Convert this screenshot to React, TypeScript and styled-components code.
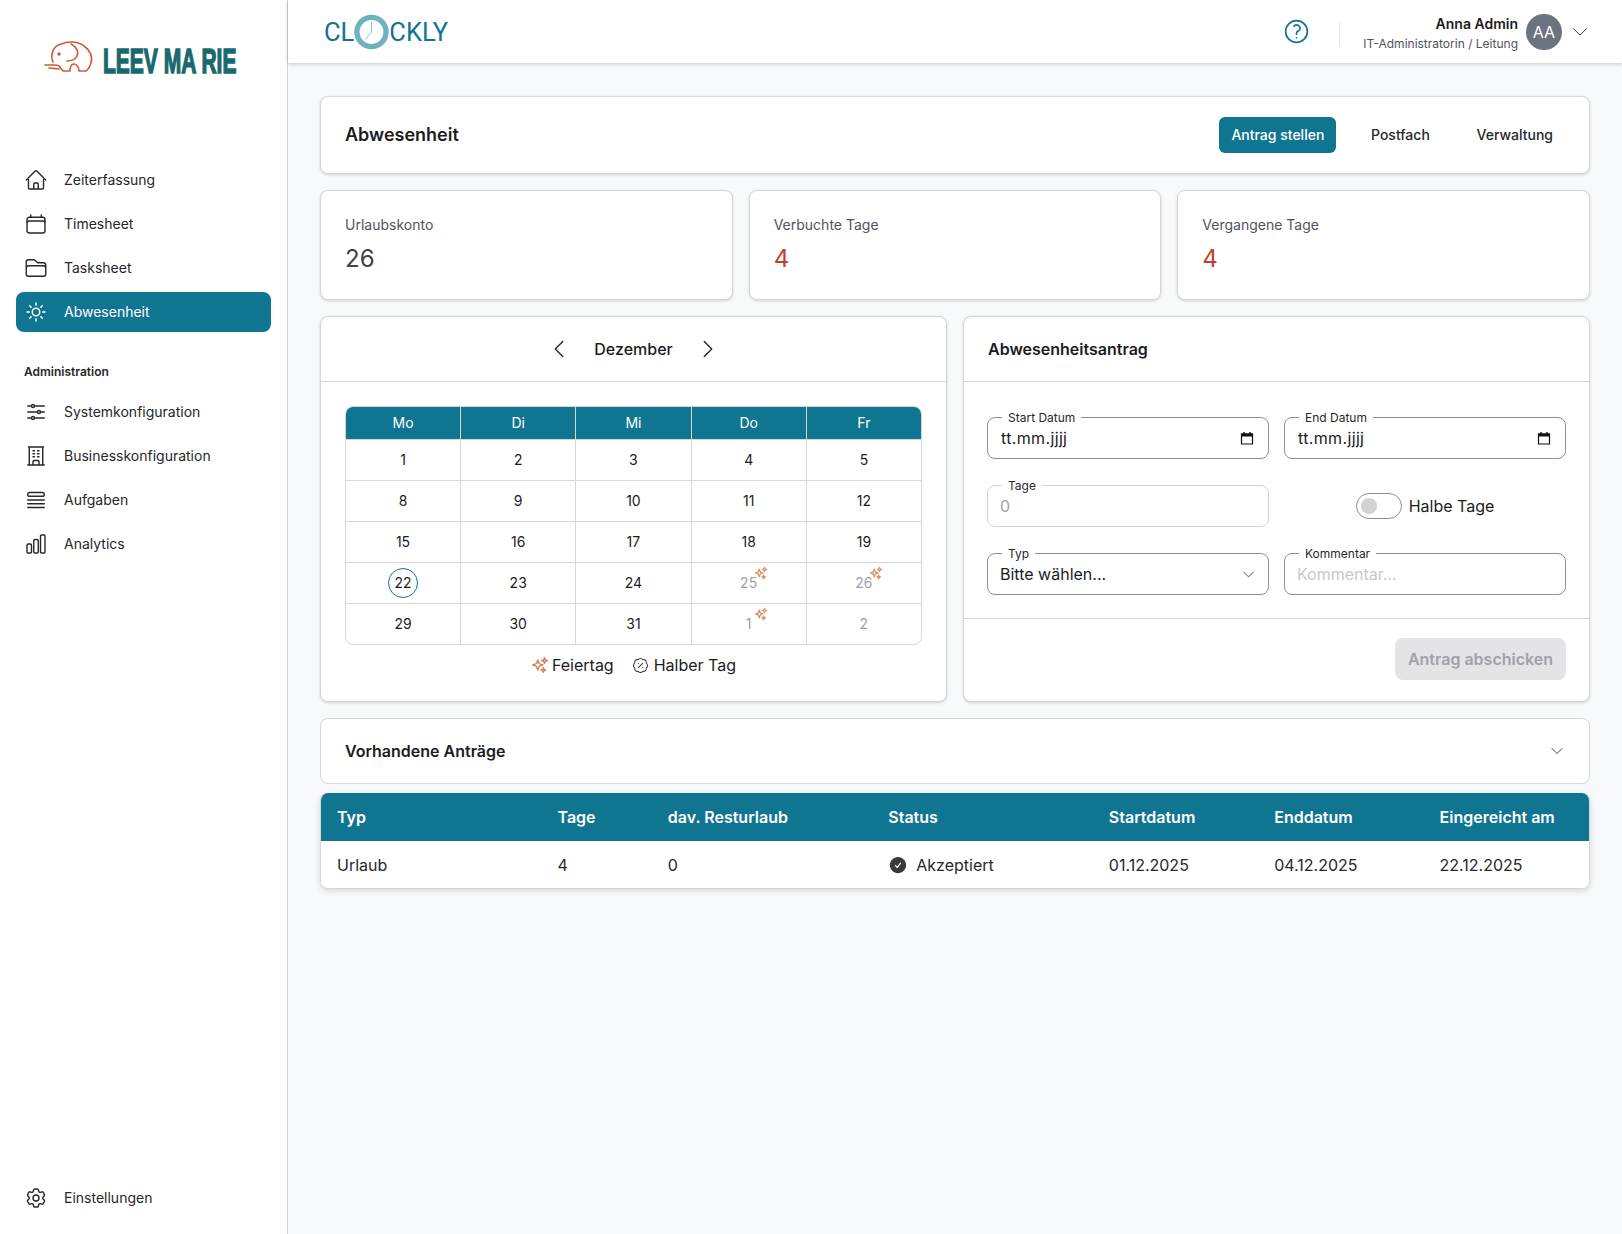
import React from "react";
import styled, { createGlobalStyle } from "styled-components";
import {
  HiOutlineHome,
  HiOutlineCalendar,
  HiOutlineFolder,
  HiOutlineSun,
  HiOutlineAdjustmentsHorizontal,
  HiOutlineBuildingOffice,
  HiOutlineQueueList,
  HiOutlineChartBar,
  HiOutlineCog6Tooth,
  HiOutlineQuestionMarkCircle,
  HiOutlineChevronDown,
  HiOutlineChevronLeft,
  HiOutlineChevronRight,
  HiOutlineSparkles,
  HiCheckCircle,
} from "react-icons/hi2";
import { BadgePercent } from "lucide-react";

const TEAL = "#107591";
const BORDER = "#d6d6da";

const GlobalStyle = createGlobalStyle`
  html, body { margin: 0; padding: 0; }
  body {
    font-family: Inter, "Liberation Sans", sans-serif;
    color: #1c1c1e;
    background: #f8f9fb;
  }
  * { box-sizing: border-box; }
`;

const Shell = styled.div`
  display: flex;
  min-height: 100vh;
`;

const Sidebar = styled.aside`
  width: 288px;
  flex: none;
  display: flex;
  flex-direction: column;
  background: #fff;
  border-right: 1px solid #d4d4d8;
  padding: 0 16px 16px;
`;

const LogoBlock = styled.div`
  height: 160px;
  display: flex;
  align-items: flex-start;
  padding: 40px 0 0 28px;
`;

const ElephantSvg = styled.svg`
  width: 60px;
  height: 45px;
  flex: none;
`;

const Wordmark = styled.span`
  flex: none;
  margin: 1px 0 0 -1px;
  font-family: "Liberation Sans", sans-serif;
  font-size: 35px;
  line-height: 40px;
  font-weight: 700;
  white-space: nowrap;
  color: #17696e;
  -webkit-text-stroke: 1.5px #17696e;
  transform: scaleX(0.6);
  transform-origin: left center;
`;

const NavList = styled.nav`
  display: flex;
  flex-direction: column;
  gap: 4px;
`;

const NavItem = styled.a<{ $active?: boolean }>`
  height: 40px;
  display: flex;
  align-items: center;
  gap: 16px;
  padding-left: 8px;
  border-radius: 8px;
  font-size: 14px;
  color: ${(p) => (p.$active ? "#fff" : "#27272a")};
  background: ${(p) => (p.$active ? TEAL : "transparent")};
  svg { width: 24px; height: 24px; flex: none; stroke-width: 1.4; }
`;

const NavLabel = styled.span`
  margin-bottom: 2px;
`;

const SectionLabel = styled.div`
  margin: 32px 0 12px 8px;
  font-size: 12px;
  line-height: 16px;
  font-weight: 600;
  color: #27272a;
`;

const SidebarFoot = styled.div`
  margin-top: auto;
`;

const Main = styled.div`
  flex: 1;
  min-width: 0;
  display: flex;
  flex-direction: column;
`;

const TopBar = styled.header`
  height: 63px;
  display: flex;
  align-items: center;
  justify-content: space-between;
  padding: 0 32px 0 36px;
  background: #fff;
  box-shadow: 0 1px 4px rgba(0, 0, 0, 0.22);
`;

const BrandText = styled.div`
  display: flex;
  align-items: center;
  font-family: Roboto, sans-serif;
  font-size: 25.5px;
  color: ${TEAL};
`;

const TopRight = styled.div`
  display: flex;
  align-items: center;
`;

const HelpIcon = styled(HiOutlineQuestionMarkCircle)`
  width: 29px;
  height: 29px;
  color: ${TEAL};
  stroke-width: 1.4;
`;

const VDivider = styled.div`
  width: 1px;
  height: 24px;
  margin: 4px 23px 0 28px;
  background: #e4e4e7;
`;

const UserText = styled.div`
  display: flex;
  flex-direction: column;
  align-items: flex-end;
  margin-right: 8px;
  padding-top: 4px;
`;

const UserName = styled.div`
  font-size: 14px;
  line-height: 20px;
  font-weight: 600;
  color: #1c1c1e;
`;

const UserRole = styled.div`
  font-size: 12px;
  line-height: 20px;
  color: #52525b;
`;

const Avatar = styled.div`
  width: 36px;
  height: 36px;
  border-radius: 50%;
  background: #6b7280;
  color: #fff;
  font-size: 16px;
  display: flex;
  align-items: center;
  justify-content: center;
  margin-right: 8px;
`;

const UserChevron = styled(HiOutlineChevronDown)`
  width: 20px;
  height: 20px;
  color: #3f3f46;
  stroke-width: 1.2;
`;

const Content = styled.main`
  padding: 33px 32px 32px;
  display: flex;
  flex-direction: column;
  gap: 16px;
`;

const Card = styled.section`
  background: #fff;
  border: 1px solid ${BORDER};
  border-radius: 8px;
  box-shadow: 0 1px 3px rgba(0, 0, 0, 0.16);
`;

const PageCard = styled(Card)`
  height: 78px;
  display: flex;
  align-items: center;
  justify-content: space-between;
  padding: 0 24px;
`;

const PageTitle = styled.h1`
  margin: 0 0 2px;
  font-size: 18px;
  font-weight: 600;
`;

const Tabs = styled.div`
  display: flex;
  gap: 22.7px;
`;

const Tab = styled.button<{ $active?: boolean }>`
  height: 36px;
  padding: 0 12px 2px;
  border: none;
  border-radius: 6px;
  font-family: inherit;
  font-size: 14px;
  font-weight: 500;
  background: ${(p) => (p.$active ? TEAL : "transparent")};
  color: ${(p) => (p.$active ? "#fff" : "#27272a")};
`;

const StatRow = styled.div`
  display: grid;
  grid-template-columns: repeat(3, minmax(0, 1fr));
  gap: 16px;
`;

const StatCard = styled(Card)`
  height: 110px;
  padding: 24px;
`;

const StatLabel = styled.div`
  font-size: 14px;
  line-height: 20px;
  color: #52525b;
`;

const StatValue = styled.div<{ $red?: boolean }>`
  margin-top: 8px;
  font-size: 24px;
  line-height: 32px;
  color: ${(p) => (p.$red ? "#c2402a" : "#3f3f46")};
`;

const TwoCols = styled.div`
  display: grid;
  grid-template-columns: repeat(2, minmax(0, 1fr));
  gap: 16px;
`;

const PanelCard = styled(Card)`
  height: 386px;
  display: flex;
  flex-direction: column;
`;

const PanelHead = styled.div<{ $center?: boolean }>`
  height: 65px;
  flex: none;
  display: flex;
  align-items: center;
  justify-content: ${(p) => (p.$center ? "center" : "flex-start")};
  gap: 23px;
  padding: 0 24px;
  border-bottom: 1px solid ${BORDER};
`;

const PanelTitle = styled.h2`
  margin: 0;
  font-size: 16px;
  font-weight: 600;
`;

const MonthName = styled.div`
  font-size: 16px;
  font-weight: 500;
`;

const MonthArrow = styled.span`
  display: flex;
  color: #27272a;
  svg { width: 24px; height: 24px; stroke-width: 1.4; }
`;

const CalBody = styled.div`
  padding: 24px 24px 0;
`;

const CalGrid = styled.div`
  display: grid;
  grid-template-columns: minmax(0, 0.99fr) repeat(4, minmax(0, 1fr));
  border: 1px solid ${BORDER};
  border-radius: 8px;
  overflow: hidden;
`;

const CalHead = styled.div`
  height: 32px;
  display: flex;
  align-items: center;
  justify-content: center;
  padding-bottom: 2px;
  background: ${TEAL};
  color: #fff;
  font-size: 14px;
  border-left: 1px solid ${BORDER};
  &:first-child { border-left: none; }
`;

const CalCell = styled.div<{ $first?: boolean }>`
  position: relative;
  height: 41px;
  display: flex;
  align-items: center;
  justify-content: center;
  padding-bottom: 1px;
  font-size: 14px;
  border-top: 1px solid ${BORDER};
  border-left: ${(p) => (p.$first ? "none" : `1px solid ${BORDER}`)};
`;

const DayNumber = styled.span<{ $muted?: boolean; $today?: boolean }>`
  display: flex;
  align-items: center;
  justify-content: center;
  width: ${(p) => (p.$today ? "30px" : "auto")};
  height: ${(p) => (p.$today ? "30px" : "auto")};
  border-radius: 50%;
  border: ${(p) => (p.$today ? `1px solid ${TEAL}` : "none")};
  color: ${(p) => (p.$muted ? "#a1a1aa" : "#1c1c1e")};
`;

const HolidayMark = styled(HiOutlineSparkles)`
  position: absolute;
  top: 3px;
  left: calc(50% + 5px);
  width: 14px;
  height: 14px;
  color: #dd8f5f;
  stroke-width: 2.2;
`;

const Legend = styled.div`
  display: flex;
  justify-content: center;
  gap: 18px;
  margin-top: 9px;
  font-size: 16px;
  line-height: 22px;
`;

const LegendItem = styled.div`
  display: flex;
  align-items: center;
  gap: 5px;
`;

const LegendSparkle = styled(HiOutlineSparkles)`
  width: 18px;
  height: 18px;
  margin-right: -2px;
  color: #d9805a;
  stroke-width: 2;
`;

const LegendBadge = styled(BadgePercent)`
  width: 17px;
  height: 17px;
  color: #3f3f46;
`;

const FormGrid = styled.div`
  display: grid;
  grid-template-columns: repeat(2, minmax(0, 1fr));
  column-gap: 15px;
  row-gap: 26px;
  padding: 35px 23px 23px;
  border-bottom: 1px solid ${BORDER};
`;

const FieldBox = styled.div<{ $disabled?: boolean }>`
  position: relative;
  height: 42px;
  display: flex;
  align-items: center;
  justify-content: space-between;
  padding: 0 12px;
  border: 1px solid ${(p) => (p.$disabled ? "#d4d4d8" : "#8e8e93")};
  border-radius: 8px;
`;

const FieldLabel = styled.label`
  position: absolute;
  top: -7px;
  left: 14px;
  padding: 0 6px;
  background: #fff;
  font-size: 12px;
  line-height: 14px;
  color: #27272a;
`;

const FieldInput = styled.input<{ $date?: boolean }>`
  flex: 1;
  min-width: 0;
  border: none;
  outline: none;
  padding: 0 0 0 ${(p) => (p.$date ? "1px" : "0")};
  background: transparent;
  font-family: inherit;
  font-size: 16px;
  letter-spacing: ${(p) => (p.$date ? "0.35px" : "normal")};
  color: #1c1c1e;
  &::placeholder { color: #c7c7cc; }
  &:disabled { color: #a1a1aa; }
`;

const PickerSvg = styled.svg`
  width: 14px;
  height: 14px;
  flex: none;
  margin-right: 2px;
`;

const SelectChevron = styled(HiOutlineChevronDown)`
  width: 15px;
  height: 15px;
  color: #27272a;
  stroke-width: 1.3;
`;

const ToggleWrap = styled.div`
  display: flex;
  align-items: center;
  justify-content: center;
  gap: 7px;
  font-size: 16px;
`;

const ToggleTrack = styled.div`
  width: 46px;
  height: 26px;
  display: flex;
  align-items: center;
  padding-left: 4px;
  border: 1px solid #8e8e93;
  border-radius: 13px;
`;

const ToggleKnob = styled.div`
  width: 16px;
  height: 16px;
  border-radius: 50%;
  background: #d1d1d6;
`;

const FormFoot = styled.div`
  display: flex;
  justify-content: flex-end;
  padding: 19px 23px;
`;

const SubmitButton = styled.button`
  height: 42px;
  padding: 0 13px;
  border: none;
  border-radius: 8px;
  background: #e4e4e7;
  color: #a1a1aa;
  font-family: inherit;
  font-size: 16px;
  font-weight: 600;
`;

const TableBlock = styled.div`
  display: flex;
  flex-direction: column;
  gap: 9px;
`;

const CollapseCard = styled.section`
  height: 66px;
  display: flex;
  align-items: center;
  justify-content: space-between;
  padding: 0 24px;
  background: #fff;
  border: 1px solid ${BORDER};
  border-radius: 8px;
`;

const CollapseChevron = styled(HiOutlineChevronDown)`
  width: 16px;
  height: 16px;
  color: #27272a;
  stroke-width: 1.3;
`;

const DataTable = styled.div`
  border: 1px solid ${BORDER};
  border-top: none;
  border-radius: 8px;
  overflow: hidden;
  background: #fff;
  box-shadow: 0 2px 6px rgba(0, 0, 0, 0.14);
`;

const TableRow = styled.div<{ $head?: boolean }>`
  height: ${(p) => (p.$head ? "48px" : "47px")};
  display: grid;
  grid-template-columns: 4fr 2fr 4fr 4fr 3fr 3fr 3fr;
  align-items: center;
  font-size: 16px;
  font-weight: ${(p) => (p.$head ? 600 : 400)};
  color: ${(p) => (p.$head ? "#fff" : "#27272a")};
  background: ${(p) => (p.$head ? TEAL : "#fff")};
`;

const TableCell = styled.div`
  padding: 0 16px;
  display: flex;
  align-items: center;
  gap: 8px;
`;

const StatusIcon = styled(HiCheckCircle)`
  width: 20px;
  height: 20px;
  color: #3a3a3c;
`;

function ElephantIcon() {
  return (
    <ElephantSvg viewBox="0 0 60 45" fill="none">
      <g
        transform="translate(-4 -5)"
        stroke="#cf5a35"
        strokeWidth="1.600"
        strokeLinecap="round"
        strokeLinejoin="round"
      >
        <path d="M13 27C10 20 13 11 21 9C28 6 38 6 44 11C50 15 53 22 51 28C50 31 49 34 46 36H39C39 33 37 29 34 29C31 29 30 33 30 36H23L19 31C18 30 16 30 14 30H5" />
        <path d="M31 9C37 12 39 17 37 21C35 25 31 26 27 26" />
        <path d="M9 33L19 34" />
        <circle cx="19" cy="19" r="1" fill="#cf5a35" />
      </g>
    </ElephantSvg>
  );
}

function ClockRing() {
  return (
    <svg width="35" height="36" viewBox="0 0 36 36" fill="none">
      <circle cx="18" cy="18" r="15" stroke="#6fb1bd" strokeWidth="5.500" />
      <path d="M18 18V7M18 18l-6.500 8" stroke="#8cc0cb" strokeWidth="1" />
    </svg>
  );
}

function PickerIcon() {
  return (
    <PickerSvg viewBox="0 0 14 14" fill="none">
      <path d="M1.500 3h11v10h-11z" stroke="#111" strokeWidth="1.200" />
      <path d="M1 2.500h12v3H1z" fill="#111" />
      <path d="M4 1v2M10 1v2" stroke="#111" strokeWidth="1.400" />
    </PickerSvg>
  );
}

const mainNav = [
  { label: "Zeiterfassung", icon: <HiOutlineHome /> },
  { label: "Timesheet", icon: <HiOutlineCalendar /> },
  { label: "Tasksheet", icon: <HiOutlineFolder /> },
  { label: "Abwesenheit", icon: <HiOutlineSun />, active: true },
];

const adminNav = [
  { label: "Systemkonfiguration", icon: <HiOutlineAdjustmentsHorizontal /> },
  { label: "Businesskonfiguration", icon: <HiOutlineBuildingOffice /> },
  { label: "Aufgaben", icon: <HiOutlineQueueList /> },
  { label: "Analytics", icon: <HiOutlineChartBar /> },
];

const stats = [
  { label: "Urlaubskonto", value: "26" },
  { label: "Verbuchte Tage", value: "4", red: true },
  { label: "Vergangene Tage", value: "4", red: true },
];

const weekDays = ["Mo", "Di", "Mi", "Do", "Fr"];

type Day = { n: number; muted?: boolean; holiday?: boolean; today?: boolean };

const days: Day[] = [
  { n: 1 }, { n: 2 }, { n: 3 }, { n: 4 }, { n: 5 },
  { n: 8 }, { n: 9 }, { n: 10 }, { n: 11 }, { n: 12 },
  { n: 15 }, { n: 16 }, { n: 17 }, { n: 18 }, { n: 19 },
  { n: 22, today: true }, { n: 23 }, { n: 24 },
  { n: 25, muted: true, holiday: true }, { n: 26, muted: true, holiday: true },
  { n: 29 }, { n: 30 }, { n: 31 },
  { n: 1, muted: true, holiday: true }, { n: 2, muted: true },
];

const tableHead = ["Typ", "Tage", "dav. Resturlaub", "Status", "Startdatum", "Enddatum", "Eingereicht am"];

export default function App() {
  return (
    <Shell>
      <GlobalStyle />
      <Sidebar>
        <LogoBlock>
          <ElephantIcon />
          <Wordmark>LEEV MA RIE</Wordmark>
        </LogoBlock>
        <NavList>
          {mainNav.map((item) => (
            <NavItem key={item.label} $active={item.active}>
              {item.icon}
              <NavLabel>{item.label}</NavLabel>
            </NavItem>
          ))}
        </NavList>
        <SectionLabel>Administration</SectionLabel>
        <NavList>
          {adminNav.map((item) => (
            <NavItem key={item.label}>
              {item.icon}
              <NavLabel>{item.label}</NavLabel>
            </NavItem>
          ))}
        </NavList>
        <SidebarFoot>
          <NavItem>
            <HiOutlineCog6Tooth />
            <NavLabel>Einstellungen</NavLabel>
          </NavItem>
        </SidebarFoot>
      </Sidebar>

      <Main>
        <TopBar>
          <BrandText>
            CL
            <ClockRing />
            CKLY
          </BrandText>
          <TopRight>
            <HelpIcon />
            <VDivider />
            <UserText>
              <UserName>Anna Admin</UserName>
              <UserRole>IT-Administratorin / Leitung</UserRole>
            </UserText>
            <Avatar>AA</Avatar>
            <UserChevron />
          </TopRight>
        </TopBar>

        <Content>
          <PageCard>
            <PageTitle>Abwesenheit</PageTitle>
            <Tabs>
              <Tab $active>Antrag stellen</Tab>
              <Tab>Postfach</Tab>
              <Tab>Verwaltung</Tab>
            </Tabs>
          </PageCard>

          <StatRow>
            {stats.map((s) => (
              <StatCard key={s.label}>
                <StatLabel>{s.label}</StatLabel>
                <StatValue $red={s.red}>{s.value}</StatValue>
              </StatCard>
            ))}
          </StatRow>

          <TwoCols>
            <PanelCard>
              <PanelHead $center>
                <MonthArrow><HiOutlineChevronLeft /></MonthArrow>
                <MonthName>Dezember</MonthName>
                <MonthArrow><HiOutlineChevronRight /></MonthArrow>
              </PanelHead>
              <CalBody>
                <CalGrid>
                  {weekDays.map((d) => (
                    <CalHead key={d}>{d}</CalHead>
                  ))}
                  {days.map((d, i) => (
                    <CalCell key={i} $first={i % 5 === 0}>
                      <DayNumber $muted={d.muted} $today={d.today}>{d.n}</DayNumber>
                      {d.holiday && <HolidayMark />}
                    </CalCell>
                  ))}
                </CalGrid>
                <Legend>
                  <LegendItem><LegendSparkle />Feiertag</LegendItem>
                  <LegendItem><LegendBadge strokeWidth={1.5} />Halber Tag</LegendItem>
                </Legend>
              </CalBody>
            </PanelCard>

            <PanelCard>
              <PanelHead>
                <PanelTitle>Abwesenheitsantrag</PanelTitle>
              </PanelHead>
              <FormGrid>
                <FieldBox>
                  <FieldLabel>Start Datum</FieldLabel>
                  <FieldInput $date readOnly value="tt.mm.jjjj" />
                  <PickerIcon />
                </FieldBox>
                <FieldBox>
                  <FieldLabel>End Datum</FieldLabel>
                  <FieldInput $date readOnly value="tt.mm.jjjj" />
                  <PickerIcon />
                </FieldBox>
                <FieldBox $disabled>
                  <FieldLabel>Tage</FieldLabel>
                  <FieldInput disabled value="0" />
                </FieldBox>
                <ToggleWrap>
                  <ToggleTrack><ToggleKnob /></ToggleTrack>
                  Halbe Tage
                </ToggleWrap>
                <FieldBox>
                  <FieldLabel>Typ</FieldLabel>
                  <FieldInput readOnly value="Bitte wählen..." />
                  <SelectChevron />
                </FieldBox>
                <FieldBox>
                  <FieldLabel>Kommentar</FieldLabel>
                  <FieldInput placeholder="Kommentar..." />
                </FieldBox>
              </FormGrid>
              <FormFoot>
                <SubmitButton disabled>Antrag abschicken</SubmitButton>
              </FormFoot>
            </PanelCard>
          </TwoCols>

          <TableBlock>
            <CollapseCard>
              <PanelTitle>Vorhandene Anträge</PanelTitle>
              <CollapseChevron />
            </CollapseCard>
            <DataTable>
              <TableRow $head>
                {tableHead.map((h) => (
                  <TableCell key={h}>{h}</TableCell>
                ))}
              </TableRow>
              <TableRow>
                <TableCell>Urlaub</TableCell>
                <TableCell>4</TableCell>
                <TableCell>0</TableCell>
                <TableCell><StatusIcon />Akzeptiert</TableCell>
                <TableCell>01.12.2025</TableCell>
                <TableCell>04.12.2025</TableCell>
                <TableCell>22.12.2025</TableCell>
              </TableRow>
            </DataTable>
          </TableBlock>
        </Content>
      </Main>
    </Shell>
  );
}
